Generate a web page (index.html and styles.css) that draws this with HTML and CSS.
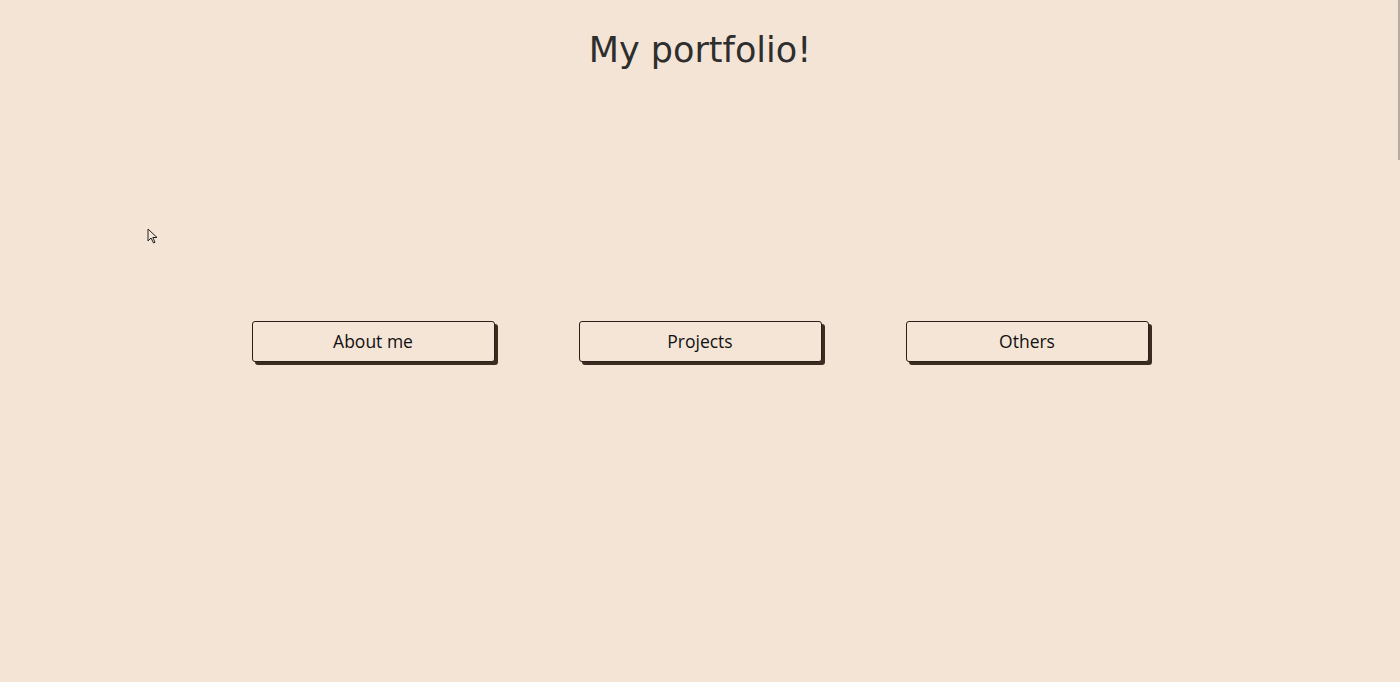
FILE: index.html
```html
<!DOCTYPE html>
<html>
<head>
<meta charset="utf-8">
<link rel="stylesheet" href="styles.css">
</head>
<body>
<header class="top">
  <h1 class="title">My portfolio!</h1>
</header>
<nav class="menu">
  <button class="btn">About me</button>
  <button class="btn">Projects</button>
  <button class="btn">Others</button>
</nav>
<svg class="cursor" width="12" height="17" viewBox="0 0 12 17"><path d="M1 1 L1 13 L4 10 L6.5 15 L8 14.3 L5.8 9.5 L10 9.5 Z" fill="#f4e4d6" stroke="#222" stroke-width="1"/></svg>
<div class="edge"></div>
</body>
</html>
```
FILE: styles.css
```css
html, body {
  margin: 0;
  padding: 0;
  height: 100%;
}
body {
  background: #f4e4d5;
  font-family: "DejaVu Sans", "Noto Sans", sans-serif;
  color: #2b2b2b;
  overflow: hidden;
}
.top {
  display: flex;
  justify-content: center;
  padding-top: 27px;
}
.title {
  margin: 0;
  font-family: "DejaVu Sans", sans-serif;
  font-weight: normal;
  font-size: 35px;
  line-height: 46px;
  color: #2e2e2e;
}
.menu {
  display: flex;
  justify-content: center;
  gap: 84px;
  margin-top: 248px;
}
.btn {
  width: 243px;
  height: 41px;
  background: #f5e5d7;
  border: 1px solid #2a1f18;
  border-radius: 3px;
  box-shadow: 3px 3px 0 #3b2c22;
  font-family: "Open Sans", "Noto Sans", sans-serif;
  font-size: 17.5px;
  color: #111;
  padding: 0 0 2px 0;
}
.cursor {
  position: absolute;
  left: 147px;
  top: 228px;
}
.edge {
  position: absolute;
  right: 0;
  top: 0;
  width: 2px;
  height: 160px;
  background: #b8aaa0;
}
```
